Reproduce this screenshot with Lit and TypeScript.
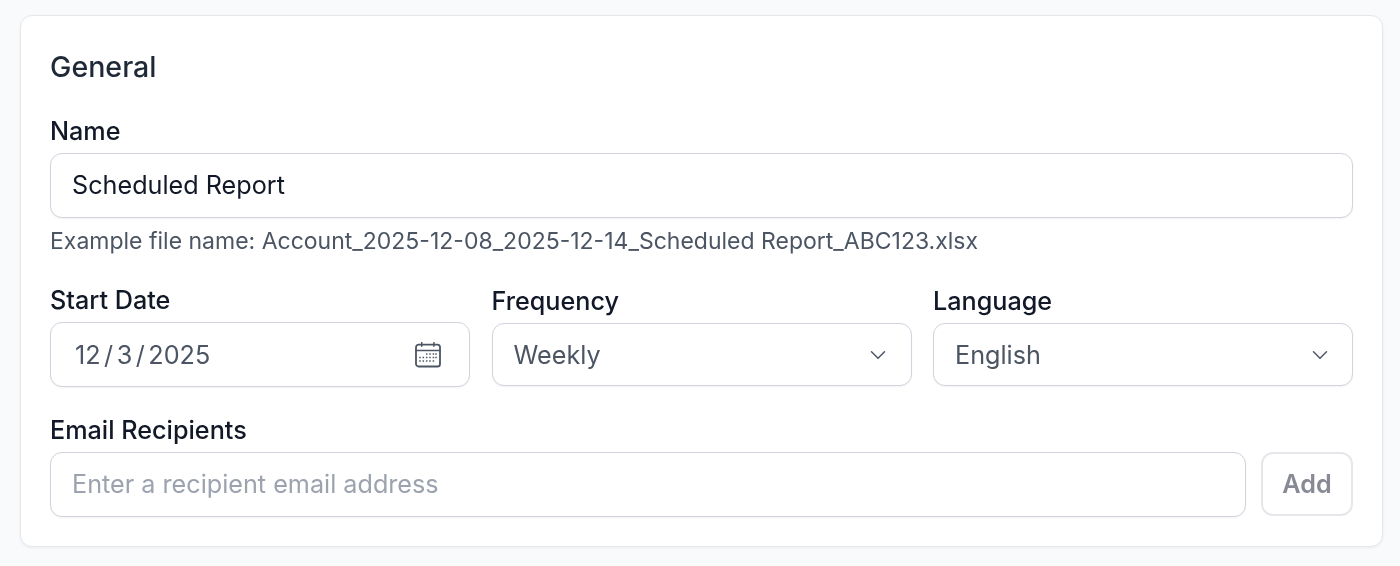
import { LitElement, html, svg, css } from "lit";
import { customElement } from "lit/decorators.js";

const chevron = html`<svg class="chev" width="16" height="10" viewBox="0 0 16 10" fill="none" stroke="#4b5563" stroke-width="1.5" stroke-linecap="round" stroke-linejoin="round"><path d="M1.5 1.8 8 8.2l6.5-6.4"/></svg>`;

const dots: [number, number][] = [
  [11.7, 12], [15, 12], [18.4, 12], [21, 12],
  [5, 15.5], [8.3, 15.5], [11.7, 15.5], [15, 15.5], [18.4, 15.5], [21, 15.5],
  [5, 19], [8.3, 19], [11.7, 19], [15, 19], [18.4, 19],
];

const calendar = html`<svg width="26" height="26" viewBox="0 0 26 26" fill="none" stroke="#4b5563" stroke-width="1.8" stroke-linecap="round">
  <rect x="1" y="2.7" width="24" height="21.8" rx="2.6" />
  <path d="M6.7 0.6v3.6M18.9 0.6v3.6" stroke-width="1.5" />
  <path d="M1 8.5h24" stroke-width="1.4" />
  ${dots.map(([x, y]) => svg`<rect x=${x - 0.75} y=${y - 0.75} width="1.5" height="1.5" fill="#4b5563" stroke="none" />`)}
</svg>`;

@customElement("app-root")
export class AppRoot extends LitElement {
  static styles = css`
    :host {
      display: block;
      box-sizing: border-box;
      height: 566px;
      padding: 15px 17px 0 20px;
      background: #f9fafb;
      font-family: Inter, "Liberation Sans", sans-serif;
      overflow: hidden;
    }
    * { box-sizing: border-box; }
    .card {
      height: 532px;
      background: #fff;
      border: 1px solid #e5e7eb;
      border-radius: 12px;
      box-shadow: 0 1px 3px rgba(0, 0, 0, 0.06);
      padding: 33px 29px 0;
      display: flex;
      flex-direction: column;
      will-change: transform;
    }
    h2 {
      margin: 0;
      font-size: 28.6px;
      line-height: 36px;
      font-weight: 500;
      color: #1f2937;
    }
    .label {
      display: block;
      font-size: 25.2px;
      line-height: 36px;
      padding-bottom: 4px;
      font-weight: 500;
      color: #111827;
    }
    .name { margin-top: 28px; }
    .field {
      display: flex;
      align-items: center;
      justify-content: space-between;
      width: 100%;
      height: 65px;
      padding: 0 21px;
      background: #fff;
      border: 1px solid #d1d3dd;
      border-radius: 12px;
      box-shadow: 0 1px 2px rgba(0, 0, 0, 0.05);
      font: 400 25.2px Inter, "Liberation Sans", sans-serif;
      color: #111827;
      outline: none;
    }
    input.field { padding-bottom: 2px; }
    input.field::placeholder { color: #9ca3af; opacity: 1; }
    .hint {
      margin-top: 7px;
      font-size: 23px;
      line-height: 33px;
      color: #4b5563;
    }
    .row {
      display: grid;
      grid-template-columns: repeat(3, 1fr);
      gap: 21.5px;
      margin-top: 24px;
      align-items: center;
    }
    .row .field { color: #4b5563; height: 63px; padding-right: 24.5px; }
    .row .date { height: 65px; padding: 0 28px 0 24px; }
    .date-text { display: flex; gap: 3.5px; }
    .email { margin-top: 25px; }
    .add-row {
      display: flex;
      gap: 15px;
    }
    .add-row .field { flex: 1; min-width: 0; }
    .add {
      width: 92px;
      height: 64px;
      background: #fff;
      border: 2px solid #e5e7eb;
      border-radius: 12px;
      font: 600 25.2px Inter, "Liberation Sans", sans-serif;
      color: #878a94;
    }
  `;

  render() {
    return html`<section class="card">
      <h2>General</h2>
      <label class="label name">Name</label>
      <input class="field" .value=${"Scheduled Report"} />
      <div class="hint">Example file name: Account_2025-12-08_2025-12-14_Scheduled Report_ABC123.xlsx</div>
      <div class="row">
        <div>
          <label class="label">Start Date</label>
          <div class="field date">
            <span class="date-text"><span>12</span><span>/</span><span>3</span><span>/</span><span>2025</span></span>
            ${calendar}
          </div>
        </div>
        <div>
          <label class="label">Frequency</label>
          <div class="field">Weekly ${chevron}</div>
        </div>
        <div>
          <label class="label">Language</label>
          <div class="field">English ${chevron}</div>
        </div>
      </div>
      <label class="label email">Email Recipients</label>
      <div class="add-row">
        <input class="field" placeholder="Enter a recipient email address" />
        <button class="add" disabled>Add</button>
      </div>
    </section>`;
  }
}
